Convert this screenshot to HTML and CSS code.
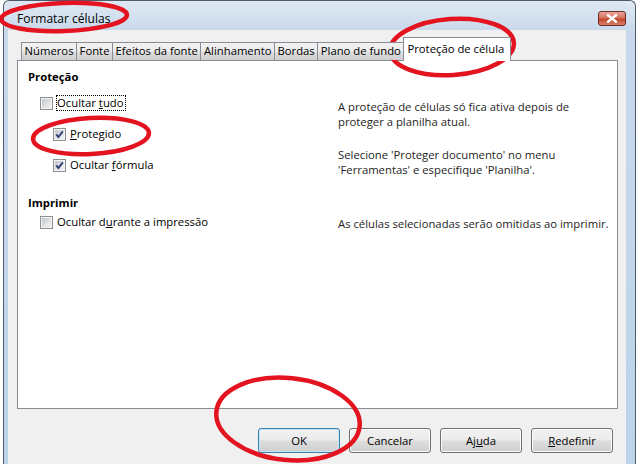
FILE: index.html
```html
<!DOCTYPE html>
<html lang="pt-BR">
<head>
<meta charset="utf-8">
<title>Formatar células</title>
<link rel="stylesheet" href="styles.css">
</head>
<body>
<div class="window">
  <div class="frame">
    <div class="titlebar">
      <span class="title">Formatar células</span>
      <span class="close"><svg width="14" height="9" viewBox="0 0 14 9"><path d="M3 1.2 L11 7.8 M11 1.2 L3 7.8" stroke="#fff" stroke-width="2.4" stroke-linecap="round"/></svg></span>
    </div>
    <div class="client">
      <div class="tabs">
        <span class="tab">Números</span>
        <span class="tab">Fonte</span>
        <span class="tab">Efeitos da fonte</span>
        <span class="tab">Alinhamento</span>
        <span class="tab">Bordas</span>
        <span class="tab">Plano de fundo</span>
        <span class="tab active">Proteção de célula</span>
      </div>
      <div class="panel">
        <div class="section-title">Proteção</div>
        <div class="section prot">
          <div class="options">
            <label class="check"><span class="box"></span><span class="focus">Ocultar <u>t</u>udo</span></label>
            <label class="check indent"><span class="box"><svg width="11" height="11" viewBox="0 0 11 11"><path d="M2.2 5.4 L4.4 8 L8.8 2.4" fill="none" stroke="#2a3d73" stroke-width="1.8"/></svg></span><span><u>P</u>rotegido</span></label>
            <label class="check indent"><span class="box"><svg width="11" height="11" viewBox="0 0 11 11"><path d="M2.2 5.4 L4.4 8 L8.8 2.4" fill="none" stroke="#2a3d73" stroke-width="1.8"/></svg></span><span>Ocultar <u>f</u>órmula</span></label>
          </div>
          <div class="info">
            <p>A proteção de células só fica ativa depois de<br>proteger a planilha atual.</p>
            <p>Selecione 'Proteger documento' no menu<br>'Ferramentas' e especifique 'Planilha'.</p>
          </div>
        </div>
        <div class="section-title print">Imprimir</div>
        <div class="section printing">
          <div class="options">
            <label class="check"><span class="box"></span><span>Ocultar d<u>u</u>rante a impressão</span></label>
          </div>
          <div class="info small">
            <p>As células selecionadas serão omitidas ao imprimir.</p>
          </div>
        </div>
      </div>
      <div class="buttons">
        <span class="btn default">OK</span>
        <span class="btn">Cancelar</span>
        <span class="btn">Aj<u>u</u>da</span>
        <span class="btn"><u>R</u>edefinir</span>
      </div>
    </div>
  </div>
  <svg class="marks" width="636" height="464" viewBox="0 0 636 464">
    <g fill="none" stroke="#e3141f" stroke-width="4.5">
      <ellipse cx="64" cy="17" rx="63" ry="14" transform="rotate(-2 64 17)"/>
      <ellipse cx="452" cy="47" rx="62" ry="28" transform="rotate(-4 452 47)"/>
      <ellipse cx="91" cy="136" rx="58" ry="18" transform="rotate(-3 91 136)"/>
      <ellipse cx="288" cy="419" rx="72" ry="41" transform="rotate(6 288 419)"/>
    </g>
  </svg>
</div>
</body>
</html>
```
FILE: styles.css
```css
* { box-sizing: border-box; }
body {
  margin: 0;
  background: #ffffff;
  font-family: "Open Sans", "Liberation Sans", sans-serif;
  font-size: 11.3px;
  color: #000;
}
.window {
  position: relative;
  width: 636px;
  height: 464px;
  overflow: hidden;
}
.frame {
  margin-left: 3px;
  width: 633px;
  height: 464px;
  border: 1px solid #4d5b6b;
  border-bottom: none;
  border-radius: 6px 6px 0 0;
  background: linear-gradient(to bottom, #dfe8f3 0, #c9d9eb 30px, #bcd3ea 100%);
  padding: 0 9px 0 4px;
  display: flex;
  flex-direction: column;
}
.titlebar {
  height: 29px;
  display: flex;
  justify-content: space-between;
  align-items: flex-start;
  padding-left: 9px;
}
.title {
  font-size: 12px;
  line-height: 16px;
  margin-top: 10px;
}
.close {
  margin-top: 10px;
  width: 28px;
  height: 15px;
  border: 1px solid #6e2a22;
  border-radius: 3px;
  background: linear-gradient(to bottom, #e9a99c 0, #d7725f 45%, #c2432c 55%, #d9826d 100%);
  display: flex;
  align-items: center;
  justify-content: center;
}
.client {
  flex: 1;
  background: #f0f0f0;
  padding: 7px 8px 0 9px;
}
.tabs {
  display: flex;
  align-items: flex-end;
  height: 23px;
  padding-left: 4px;
  position: relative;
  z-index: 1;
}
.tab {
  height: 18px;
  line-height: 16px;
  padding: 0 2.5px;
  border: 1px solid #898c95;
  border-bottom: none;
  margin-left: -1px;
  background: linear-gradient(to bottom, #f2f2f2 0, #ebebeb 50%, #dddddd 51%, #cfcfcf 100%);
  white-space: nowrap;
}
.tab:first-child { margin-left: 0; }
.tab.active {
  height: 24px;
  margin-bottom: -1px;
  background: #ffffff;
  padding: 3px 6px 0 3px;
}
.panel {
  height: 349px;
  border: 1px solid #898c95;
  background: #ffffff;
  padding: 8px 10px 0 10px;
}
.section-title {
  font-weight: bold;
  line-height: 16px;
  height: 16px;
}
.section-title.print { margin-top: 18px; }
.section {
  display: flex;
}
.section.prot { margin-top: 10px; height: 82px; }
.section.printing { margin-top: 3px; }
.options {
  width: 310px;
  flex: none;
  display: flex;
  flex-direction: column;
  gap: 15px;
  padding-left: 12px;
}
.check {
  display: flex;
  align-items: center;
  gap: 4px;
  height: 16px;
  line-height: 16px;
  white-space: nowrap;
}
.check.indent { margin-left: 13px; }
.box {
  width: 13px;
  height: 13px;
  border: 1px solid #8e8f8f;
  background: linear-gradient(135deg, #b9bec5 0, #dfe1e4 55%, #f6f6f6 100%);
  box-shadow: inset 0 0 0 1px #f4f4f4;
  display: flex;
  align-items: center;
  justify-content: center;
  flex: none;
}
.box svg { display: block; }
.focus {
  border: 1px dotted #000;
  height: 16px;
  line-height: 14px;
  margin-left: -1px;
  padding-right: 1px;
}
.info {
  margin-top: 4px;
  line-height: 15px;
  color: #1e1e1e;
  white-space: nowrap;
}
.info p { margin: 0 0 18px 0; }
.info.small { margin-top: 2px; }
.buttons {
  margin-top: 19px;
  display: flex;
  justify-content: flex-end;
  gap: 9px;
  padding-right: 5px;
}
.btn {
  width: 82px;
  height: 25px;
  border: 1px solid #707070;
  border-radius: 3px;
  background: linear-gradient(to bottom, #f2f2f2 0, #ebebeb 48%, #dddddd 52%, #cfcfcf 100%);
  box-shadow: inset 0 0 0 1px #fcfcfc;
  display: flex;
  align-items: center;
  justify-content: center;
  line-height: 16px;
}
.btn.default {
  border-color: #3c7fb1;
  box-shadow: inset 0 0 0 1px #c4e4f7;
}
.marks {
  position: absolute;
  left: 0;
  top: 0;
  pointer-events: none;
}
```
